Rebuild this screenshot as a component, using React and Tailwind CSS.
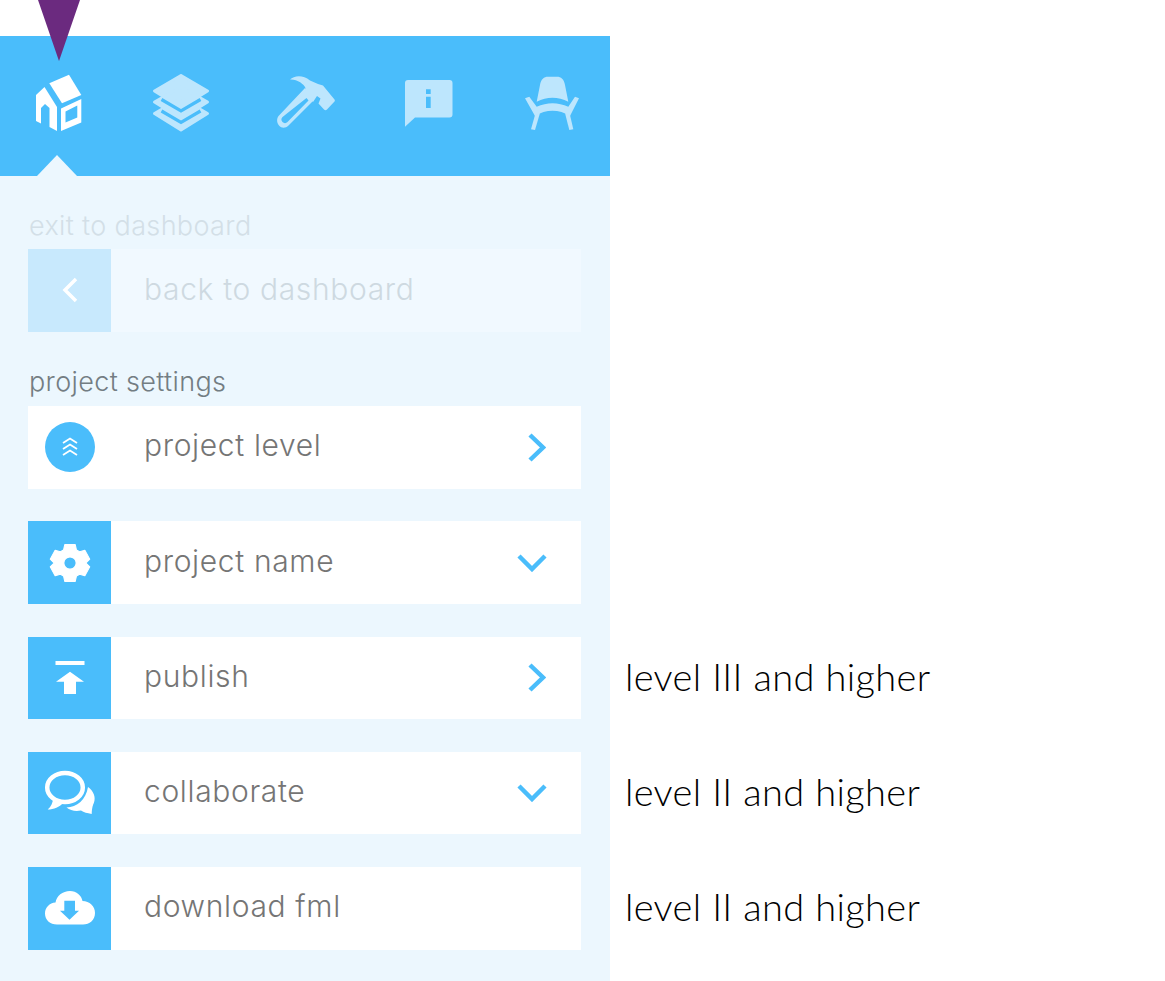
const sans = "font-['Inter',sans-serif]";

function HouseIcon() {
  return (
    <svg width="60" height="60" viewBox="29 74 60 60" fill="#fff">
      <polygon points="49.3,83.3 69,74.7 81.3,95 62,103.3" />
      <polygon points="36,95 44.5,87 57,107 57,131 49.5,127 49.5,108 45,104 41,108 41,123.5 36,121" />
      <path fillRule="evenodd" d="M61 108.5 L81.3 99 L81.3 122.5 L61 131 Z M65.5 111.5 V122.5 L77.3 117.5 V105.5 Z" />
    </svg>
  );
}

function LayersIcon() {
  return (
    <svg width="60" height="60" viewBox="152 74 60 60">
      <g fill="#bde6fd" stroke="#bde6fd" strokeWidth="3" strokeLinejoin="round">
        <polygon points="181,75.500 207.500,91 181,107.500 154.500,91" />
        <polygon points="181,87 207.500,102 181,118.500 154.500,102" />
        <polygon points="181,98 207.500,113.500 181,130 154.500,113.500" />
      </g>
      <g fill="none" stroke="#4abdfb" strokeWidth="3.200">
        <path d="M161.500 99.500 L181 111 L200.500 99.500" />
        <path d="M161.500 111 L181 122.500 L200.500 111" />
      </g>
    </svg>
  );
}

function HammerIcon() {
  return (
    <svg width="60" height="60" viewBox="275 74 60 60" fill="#bde6fd">
      <path d="M289 79.500 C293 75.500 302 74.500 309 80.500 L317 84 L322 85.500 L333.500 99.500 C334 100.500 334 101 333.500 101.500 L326 109.500 C325 110.500 324 110.500 323 109.500 L317.500 103.500 L319.500 98.500 L316 96 L312 102 L304 92 L304.500 88 C303 84 296 79 289 79.500 Z" />
      <path fillRule="evenodd" d="M304 88 L313 100 L287.500 125.500 C284.500 128.500 280.500 128.500 278 125.500 C275.500 122.500 275.500 118 278 115.500 Z M305.500 98 L281.500 117 C280 118.500 280 120.500 281.500 122 C283 123.500 285 123.500 286.500 122 L307.500 100.500 Z" />
    </svg>
  );
}

function MessageIcon() {
  return (
    <svg width="60" height="60" viewBox="399 74 60 60" fill="#bde6fd">
      <path fillRule="evenodd" d="M408 80 H449.500 A3 3 0 0 1 452.500 83 V114.500 A3 3 0 0 1 449.500 117.500 H415 L405 126.700 V83 A3 3 0 0 1 408 80 Z M426 89.300 V94 H430.700 V89.300 Z M426 96.700 V108 H430.700 V96.700 Z" />
    </svg>
  );
}

function ChairIcon() {
  return (
    <svg width="60" height="60" viewBox="522 74 60 60" fill="#bde6fd">
      <path d="M536.700 101.700 L540 85 C541 79 544 76.700 548 76.700 H557 C561 76.700 564 79 565 85 L568.300 101.700 C558 96.500 547 96.500 536.700 101.700 Z" />
      <path d="M525 98.300 L529.300 96.700 L536.700 106.700 C547 102 558 102 568.300 106.700 L575 96.700 L579 98.300 L570 116 C559 109 546 109 535 116 Z" />
      <path d="M535 115 L540 113 L535 130 L531 129.300 Z" />
      <path d="M565 113 L570 115 L573.300 129.300 L569.300 130 Z" />
    </svg>
  );
}

function SettingsIcon() {
  return (
    <svg width="42" height="42" viewBox="0 0 24 24" fill="#fff" stroke="#fff" strokeWidth="0.600" strokeLinejoin="round">
      <path fillRule="evenodd" d="M9 1.500 H15 L15.700 4.600 L17.500 5.600 L20.500 4.700 L23.300 9.800 L21 12 L23.300 14.200 L20.500 19.300 L17.500 18.400 L15.700 19.400 L15 22.500 H9 L8.300 19.400 L6.500 18.400 L3.500 19.300 L0.700 14.200 L3 12 L0.700 9.800 L3.500 4.700 L6.500 5.600 L8.300 4.600 Z M12 8.500 A3.500 3.500 0 1 0 12 15.500 A3.500 3.500 0 1 0 12 8.500 Z" />
    </svg>
  );
}

function PublishIcon() {
  return (
    <svg width="30" height="34" viewBox="0 0 30 34" fill="#fff">
      <rect x="0.500" y="0" width="29" height="4" />
      <polygon points="15,10.700 29,20.700 21,20.700 21,33 9,33 9,20.700 1,20.700" />
    </svg>
  );
}

function ChatIcon() {
  return (
    <svg width="52" height="46" viewBox="0 0 52 46" fill="none">
      <ellipse cx="21" cy="17.500" rx="17.800" ry="14.500" stroke="#fff" strokeWidth="4.500" />
      <path d="M9 28 C9 33 7 36.500 3.700 39.500 C10 39.500 15.500 37 19 33 Z" fill="#fff" />
      <path d="M44 17 C49.500 21 52 27 50 32.500 C49 35 48 37 47.700 44 C43 43 40 42.500 37 40.500 C31 41.500 26.500 40.500 22.500 37.500 C33 37 42 30 44 17 Z" fill="#fff" />
    </svg>
  );
}

function CloudIcon() {
  return (
    <svg width="50" height="34" viewBox="0 0 50 34" fill="#fff">
      <path fillRule="evenodd" d="M25 0 C31.500 0 36.500 4.500 37.500 10 C44.500 10 50 15 50 22 C50 29 44.500 33.500 38 33.500 H12 C5 33.500 0 29 0 22.500 C0 16.500 4.500 12 10.500 11.500 C11.500 5 17.500 0 25 0 Z M19.300 9.700 V19.700 H15 L24.500 28.700 L34 19.700 H30 V9.700 Z" />
    </svg>
  );
}

function LevelIcon() {
  return (
    <div className="flex h-[50px] w-[50px] items-center justify-center rounded-full bg-[#4abdfb]">
      <svg width="16" height="20" viewBox="0 0 16 20" fill="none" stroke="#fff" strokeWidth="1.800">
        <path d="M1 6 L8 1.500 L15 6" />
        <path d="M1 12 L8 7.500 L15 12" />
        <path d="M1 18 L8 13.500 L15 18" />
      </svg>
    </div>
  );
}

function ArrowRight() {
  return (
    <svg width="18" height="29" viewBox="0 0 18 29" fill="none" stroke="#4abdfb" strokeWidth="4.500" className="mr-[35px]">
      <path d="M2 2 L15 14.500 L2 27" />
    </svg>
  );
}

function ArrowDown() {
  return (
    <svg width="30" height="18" viewBox="0 0 30 18" fill="none" stroke="#4abdfb" strokeWidth="4.500" className="mr-[34px]">
      <path d="M2 2 L15 15 L28 2" />
    </svg>
  );
}

function BackIcon() {
  return (
    <svg width="16" height="26" viewBox="0 0 16 26" fill="none" stroke="#fff" strokeWidth="3.500" className="mb-[2px]">
      <path d="M14 2 L3 13 L14 24" />
    </svg>
  );
}

function SettingRow({ icon, label, arrow, plain }) {
  return (
    <div className="flex h-[82.500px] items-center bg-white">
      <div className={`flex h-full w-[83px] shrink-0 items-center justify-center ${plain ? '' : 'bg-[#4abdfb]'}`}>
        {icon}
      </div>
      <span className={`ml-[33px] flex-1 pb-[3px] text-[30px] font-light tracking-[0.650px] text-[#757575] ${sans}`}>{label}</span>
      {arrow === 'right' && <ArrowRight />}
      {arrow === 'down' && <ArrowDown />}
    </div>
  );
}

export default function App() {
  return (
    <div className="relative min-h-[981px] w-[1165px] bg-white pt-[36px]">
      <div className="absolute left-[38px] top-0 z-10 h-0 w-0 border-x-[21.500px] border-t-[61px] border-x-transparent border-t-[#6b2a7f]" />
      <div className="flex">
        <div className="w-[610px] shrink-0 bg-[#ecf7fe]">
          <div className="relative flex h-[140px] items-start gap-[63.250px] bg-[#4abdfb] pl-[29px] pt-[38px]">
            <HouseIcon />
            <LayersIcon />
            <HammerIcon />
            <MessageIcon />
            <ChairIcon />
            <div className="absolute bottom-0 left-[37px] h-0 w-0 border-x-[20.500px] border-b-[21px] border-x-transparent border-b-[#ecf7fe]" />
          </div>
          <div className="pb-[31px] pl-[28px] pr-[29px] pt-[32px]">
            <p className={`pl-px text-[27px] font-light leading-[36px] tracking-[0.350px] text-[#d3dfe7] ${sans}`}>exit to dashboard</p>
            <div className="mt-[5px] flex h-[83px] items-center bg-[#f1f9ff]">
              <div className="flex h-full w-[83px] items-center justify-center bg-[#c8e9fd]">
                <BackIcon />
              </div>
              <span className={`ml-[33px] pb-[3px] text-[30px] font-light tracking-[0.650px] text-[#ced9e1] ${sans}`}>back to dashboard</span>
            </div>
            <p className={`mt-[32px] pl-px text-[27px] font-light leading-[36px] tracking-[0.350px] text-[#737d83] ${sans}`}>project settings</p>
            <div className="mt-[6px] flex flex-col gap-[32.750px]">
              <SettingRow plain icon={<LevelIcon />} label="project level" arrow="right" />
              <SettingRow icon={<SettingsIcon />} label="project name" arrow="down" />
              <SettingRow icon={<PublishIcon />} label="publish" arrow="right" />
              <SettingRow icon={<ChatIcon />} label="collaborate" arrow="down" />
              <SettingRow icon={<CloudIcon />} label="download fml" />
            </div>
          </div>
        </div>
        <div className="ml-[15px] flex flex-col pt-[599px] font-['Lato',sans-serif] text-[38px] font-light leading-[82.500px] tracking-[0.350px] text-black">
          <span>level III and higher</span>
          <span className="mt-[32.250px]">level II and higher</span>
          <span className="mt-[32.250px]">level II and higher</span>
        </div>
      </div>
    </div>
  );
}
